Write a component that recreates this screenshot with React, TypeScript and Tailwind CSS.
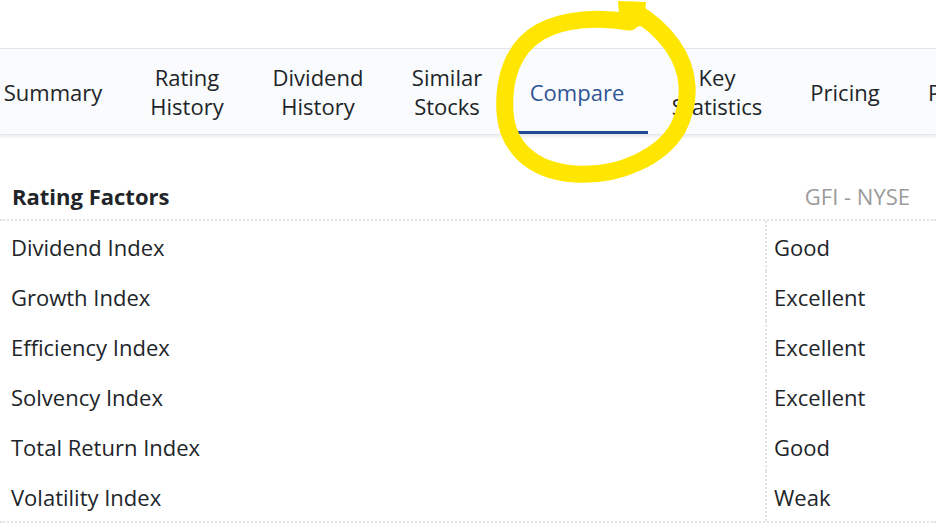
import React from 'react';

const tabs = [
  { lines: ['Summary'], w: 'w-[146px]' },
  { lines: ['Rating', 'History'], w: 'w-[122px]' },
  { lines: ['Dividend', 'History'], w: 'w-[140px]' },
  { lines: ['Similar', 'Stocks'], w: 'w-[118px]' },
  { lines: ['Compare'], w: 'w-[142px]', active: true },
  { lines: ['Key', 'Statistics'], w: 'w-[138px]' },
  { lines: ['Pricing'], w: 'w-[118px]' },
];

const rows = [
  ['Dividend Index', 'Good'],
  ['Growth Index', 'Excellent'],
  ['Efficiency Index', 'Excellent'],
  ['Solvency Index', 'Excellent'],
  ['Total Return Index', 'Good'],
  ['Volatility Index', 'Weak'],
];

export default function App() {
  return (
    <div className="relative w-[936px] h-[532px] overflow-hidden bg-white text-[#212529] font-['Open_Sans','Noto_Sans',sans-serif] text-[22px]">
      <div className="h-[48px]" />

      {/* tab bar */}
      <div className="h-[87px] border-t border-[#e2e6ea] bg-[#fafbfc] shadow-[0_2px_3px_rgba(0,0,0,0.08)] border-b border-b-[#e6e8eb] overflow-hidden">
        <div className="flex h-full -ml-[20px]">
          {tabs.map((t) => (
            <div
              key={t.lines.join(' ')}
              className={`relative shrink-0 ${t.w} flex flex-col items-center justify-center pt-[1px] leading-[29px] ${t.active ? 'text-[#2f5597]' : ''}`}
            >
              {t.lines.map((l) => (
                <span key={l} className="whitespace-nowrap">{l}</span>
              ))}
              {t.active && <div className="absolute left-0 right-0 bottom-0 h-[3px] bg-[#234a94]" />}
            </div>
          ))}
          <div className="shrink-0 flex items-center pl-[24px] pt-[1px] whitespace-nowrap">Peers</div>
        </div>
      </div>

      {/* rating factors table */}
      <div className="mt-[38px]">
        <div className="flex items-center justify-between h-[48px] pt-[1px] pl-[12px] pr-[26px] border-b-2 border-dotted border-[#e3e3e3]">
          <span className="font-bold">Rating Factors</span>
          <span className="text-[#9b9b9b]">GFI - NYSE</span>
        </div>
        <div className="border-b-2 border-dotted border-[#e3e3e3]">
          {rows.map(([name, val]) => (
            <div key={name} className="flex h-[50px]">
              <div className="w-[765px] pl-[11px] pt-[3px] flex items-center">{name}</div>
              <div className="flex-1 pl-[7px] pt-[3px] flex items-center border-l-2 border-dotted border-[#e3e3e3]">{val}</div>
            </div>
          ))}
        </div>
      </div>

      {/* yellow annotation */}
      <svg className="absolute inset-0 pointer-events-none" width="936" height="532" viewBox="0 0 936 532">
        <path
          d="M 630 22 C 600 17, 565 18, 540 32 C 512 48, 503 80, 505 112 C 507 145, 530 171, 575 174 C 620 177, 662 156, 678 128 C 692 100, 690 70, 672 45 C 660 28, 646 18, 632 10"
          fill="none"
          stroke="#ffe600"
          strokeWidth="17"
          strokeLinecap="round"
          strokeLinejoin="round"
        />
        <path d="M 618 1 L 646 2 L 644 26 L 620 28 Z" fill="#ffe600" />
      </svg>
    </div>
  );
}
